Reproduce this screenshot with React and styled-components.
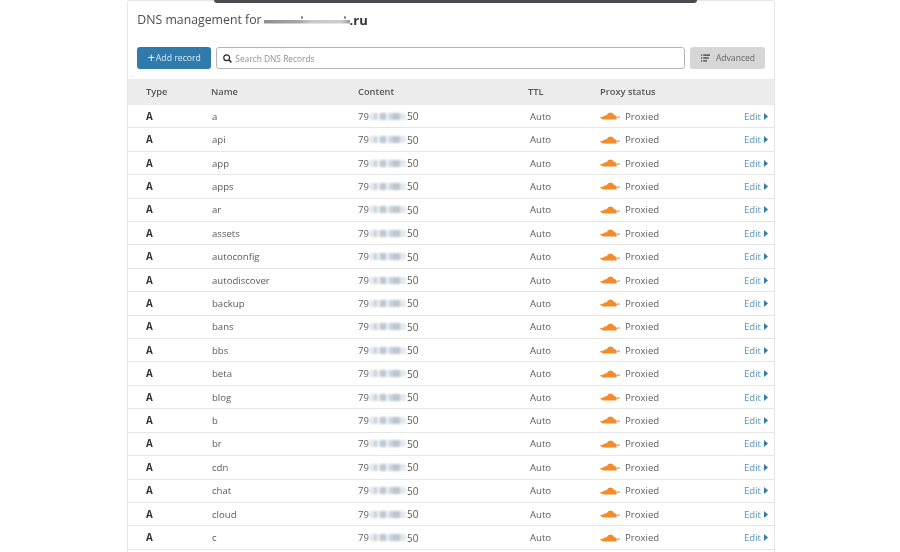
import React from "react";
import styled, { createGlobalStyle } from "styled-components";

const names = ["a","api","app","apps","ar","assets","autoconfig","autodiscover","backup","bans","bbs","beta","blog","b","br","cdn","chat","cloud","c"];

const Global = createGlobalStyle`
  html, body { margin: 0; padding: 0; background: #fff; height: 552px; overflow: hidden; }
  body { font-family: "Open Sans", "Noto Sans", sans-serif; color: #4a4a4a; }
`;
const Page = styled.div`
  width: 900px; height: 552px; overflow: hidden; position: relative; background: #fff; filter: blur(0.3px);
`;
const TopBar = styled.div`
  position: absolute; top: 0; left: 214px; width: 483px; height: 2.5px;
  background: #4b4a50; border-radius: 0 0 3px 3px;
`;
const Panel = styled.main`
  margin-left: 127px; width: 646px; height: 552px;
  border: 1px solid #e6e6e6; border-bottom: 0; border-radius: 3px 3px 0 0; background: #fff;
`;
const Title = styled.h1`
  margin: 0; padding: 0 0 0 9.3px; height: 38px; display: flex; align-items: center;
  font-size: 12.3px; font-weight: 400; color: #4d4d4d; line-height: 18px;
`;
const DomainSmudge = styled.span`
  display: inline-block; width: 86px; height: 8px; margin-left: 2px; filter: blur(0.7px);
  background:
    radial-gradient(circle at 38px 1.5px, #777 0 1px, transparent 1.3px),
    radial-gradient(circle at 81px 1.5px, #777 0 1px, transparent 1.3px),
    linear-gradient(90deg, #8f8f8f 0, #a5a5a5 40%, #c8c8c8 55%, #cfcfcf 90%, #999 100%) 0 3.5px / 100% 3.5px no-repeat;
`;
const Domain = styled.b`
  font-weight: 700; color: #333; font-size: 13px;
`;
const Toolbar = styled.div`
  display: flex; align-items: stretch; height: 22px; margin: 8px 9px 0 9.3px; gap: 5px;
`;
const AddButton = styled.button`
  width: 74px; border: 0; border-radius: 3px; background: #2f7bad; color: #dbe9f2;
  font: 400 8.7px "Open Sans", sans-serif; padding: 0; display: flex; align-items: center; justify-content: center; gap: 1px;
  span:first-child { font-size: 12.5px; color: #fff; line-height: 1; }
`;
const Search = styled.label`
  flex: 1; border: 1px solid #b5b5b5; border-radius: 3px; display: flex; align-items: center; gap: 3px;
  padding-left: 6px; font-size: 8.4px; color: #8f8f8f; background: #fff;
`;
const AdvancedButton = styled.button`
  width: 75px; border: 0; border-radius: 3px; background: #d6d6d6; color: #666;
  font: 400 8.6px "Open Sans", sans-serif; padding: 0 0 0 1px; display: flex; align-items: center; justify-content: center; gap: 6px;
`;
const columns = "18px 65px 147px 170px 72px 1fr auto 6px";
const HeaderRow = styled.div`
  display: grid; grid-template-columns: ${columns}; align-items: center; height: 26px; margin-top: 10px;
  padding-bottom: 1px; box-sizing: border-box;
  background: #ececec; font-size: 9.3px; font-weight: 600; color: #555;
`;
const Row = styled.div`
  display: grid; grid-template-columns: ${columns}; align-items: center; height: 22.42px;
  border-bottom: 1px solid #e6e6e6; font-size: 9.6px; color: #5a5a5a;
`;
const HeadCell = styled.span`
  grid-column: ${p => p.$c};
`;
const TypeCell = styled.span`
  grid-column: 2; font-weight: 700; color: #333; font-size: 9.8px;
`;
const NameCell = styled.span`
  grid-column: 3; padding-left: 1px;
`;
const ContentCell = styled.span`
  grid-column: 4; display: flex; align-items: center;
`;
const IpSmudge = styled.span`
  display: inline-block; width: 37px; height: 7px; margin: 0 0.5px; filter: blur(0.9px);
  background: linear-gradient(90deg,
    #e6eaee 0 5px, #c6d0d8 5px 8px, #eef1f3 8px 11px, #bcc7d0 11px 17px, #eceff2 17px 20px,
    #c9d2da 20px 24px, #b9c5cf 24px 31px, #e4e8ec 31px 37px);
`;
const IpEnd = styled.span`
  font-size: 10px;
`;
const TtlCell = styled.span`
  grid-column: 5; padding-left: 2px;
`;
const ProxyCell = styled.span`
  grid-column: 6; display: flex; align-items: center; gap: 5px; color: #5f5f5f;
`;
const EditCell = styled.a`
  grid-column: 7; color: #5b93b8; display: flex; align-items: center; gap: 3px;
`;

const Cloud = () => (
  <svg width="20" height="8" viewBox="0 0 20 8">
    <path d="M0 5.6 Q2.4 4.6 3.6 4.6 Q4.6 3 6.4 3.4 Q8 0.2 10.8 0.4 Q13.2 0.8 13.8 2.8 Q15.6 2.6 16 4.6 L17 5 L16.4 7.4 L2.6 7.4 Q2 6.2 0 6 Z" fill="#f58a2a" />
    <rect x="17" y="4.6" width="3" height="0.9" fill="#888" />
  </svg>
);
const SearchIcon = () => (
  <svg width="9" height="9" viewBox="0 0 9 9" fill="none" stroke="#222" strokeWidth="1.2">
    <circle cx="3.7" cy="3.7" r="2.9" /><path d="M5.8 5.8 L8.4 8.4" strokeWidth="1.5" />
  </svg>
);
const ListIcon = () => (
  <svg width="9" height="8" viewBox="0 0 9 8" fill="#333">
    <rect x="0" y="0.5" width="1.2" height="1.2" /><rect x="2.2" y="0.5" width="6.8" height="1.2" />
    <rect x="0" y="3.4" width="1.2" height="1.2" /><rect x="2.2" y="3.4" width="5.6" height="1.2" />
    <rect x="0" y="6.3" width="1.2" height="1.2" /><rect x="2.2" y="6.3" width="3.8" height="1.2" />
  </svg>
);
const Caret = () => (
  <svg width="4" height="7" viewBox="0 0 4 7"><path d="M0 0 L4 3.5 L0 7 Z" fill="#2f7bad" /></svg>
);

export default function App() {
  return (
    <Page>
      <Global />
      <TopBar />
      <Panel>
        <Title>
          DNS management for
          <DomainSmudge />
          <Domain>.ru</Domain>
        </Title>
        <Toolbar>
          <AddButton><span>+</span><span>Add record</span></AddButton>
          <Search><SearchIcon />Search DNS Records</Search>
          <AdvancedButton><ListIcon />Advanced</AdvancedButton>
        </Toolbar>
        <HeaderRow>
          <HeadCell $c={2}>Type</HeadCell>
          <HeadCell $c={3}>Name</HeadCell>
          <HeadCell $c={4}>Content</HeadCell>
          <HeadCell $c={5}>TTL</HeadCell>
          <HeadCell $c={6}>Proxy status</HeadCell>
        </HeaderRow>
        {names.map(n => (
          <Row key={n}>
            <TypeCell>A</TypeCell>
            <NameCell>{n}</NameCell>
            <ContentCell>79<IpSmudge /><IpEnd>50</IpEnd></ContentCell>
            <TtlCell>Auto</TtlCell>
            <ProxyCell><Cloud />Proxied</ProxyCell>
            <EditCell>Edit <Caret /></EditCell>
          </Row>
        ))}
      </Panel>
    </Page>
  );
}
